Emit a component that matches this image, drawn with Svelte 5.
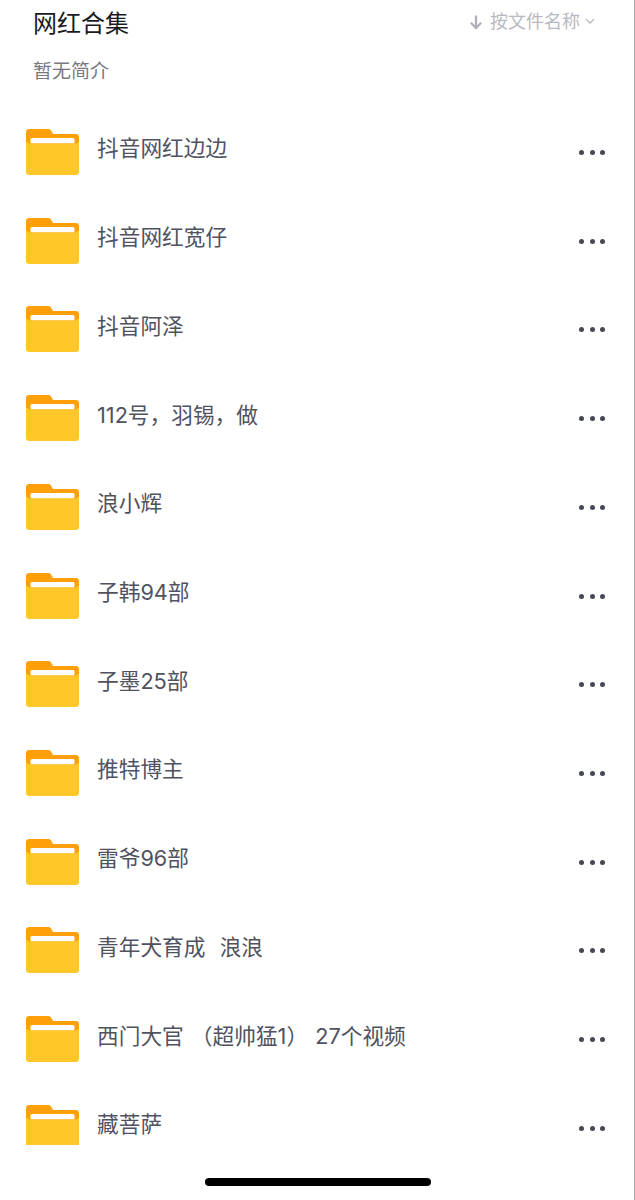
<script>
  const folders = [
    "抖音网红边边",
    "抖音网红宽仔",
    "抖音阿泽",
    "112号，羽锡，做",
    "浪小辉",
    "子韩94部",
    "子墨25部",
    "推特博主",
    "雷爷96部",
    "青年犬育成  浪浪",
    "西门大官 （超帅猛1） 27个视频",
    "藏菩萨"
  ];
</script>

<div class="page">
  <div class="head">
    <div class="title">网红合集</div>
    <div class="sort">
      <svg class="arrow" width="14" height="16" viewBox="0 0 14 16">
        <path d="M7 1.5V14M1.8 8.8 7 14l5.2-5.2" />
      </svg>
      <span>按文件名称</span>
      <svg class="chev" width="10" height="7" viewBox="0 0 10 7">
        <path d="M1 1.2 5 5.2l4-4" />
      </svg>
    </div>
  </div>
  <div class="desc">暂无简介</div>

  <div class="list">
    {#each folders as name}
      <div class="row">
        <svg class="folder" width="53" height="46" viewBox="0 0 53 46">
          <path fill="#ff9f0a" d="M3 0h19c1.6 0 2.4.6 3.2 1.8L27 5h23c1.7 0 3 1.3 3 3v12H0V3c0-1.7 1.3-3 3-3z" />
          <rect x="4.5" y="9" width="44" height="5.5" rx="1.5" fill="#fff" />
          <path fill="#ffc727" d="M0 13h1.5c.6 1 1.6 1.5 3 1.5h44c1.4 0 2.4-.5 3-1.5H53v30c0 1.7-1.3 3-3 3H3c-1.7 0-3-1.3-3-3z" />
        </svg>
        <div class="name">{name}</div>
        <div class="more"><i></i><i></i><i></i></div>
      </div>
    {/each}
  </div>

  <div class="home"></div>
</div>

<style>
  :global(body) {
    margin: 0;
    background: #fff;
  }

  .page {
    width: 635px;
    height: 1200px;
    box-sizing: border-box;
    border-right: 1px solid #a8a8a8;
    overflow: hidden;
    font-family: "Noto Sans CJK SC", "Noto Sans", sans-serif;
    background: #fff;
  }

  .head {
    height: 42px;
    padding: 0 39px 0 33px;
    display: flex;
    align-items: center;
    justify-content: space-between;
  }

  .title {
    font-size: 24px;
    color: #1a1a1e;
  }

  .sort {
    display: flex;
    align-items: center;
    color: #b8b9c2;
    font-size: 18px;
    margin-top: -2px;
  }

  .sort span {
    margin: 0 5px 0 7px;
  }

  .sort svg {
    fill: none;
    stroke: #b0b1ba;
  }

  .arrow {
    stroke-width: 2.3;
    margin-top: 3px;
  }

  .chev {
    stroke-width: 1.2;
    margin-top: 3px;
  }

  .desc {
    margin: 14px 0 0 33px;
    height: 28px;
    line-height: 28px;
    font-size: 19px;
    color: #77787f;
  }

  .list {
    margin-top: 23.6px;
    height: 1037.4px;
    overflow: hidden;
  }

  .row {
    height: 88.73px;
    padding-left: 26px;
    padding-right: 29px;
    display: flex;
    align-items: center;
    position: relative;
  }

  .folder {
    flex: none;
  }

  .name {
    flex: 1;
    margin: -10px 0 0 18px;
    font-family: Inter, "Noto Sans CJK SC", sans-serif;
    font-size: 21.7px;
    color: #50525f;
    white-space: pre;
    word-spacing: 1px;
  }

  .more {
    display: flex;
    gap: 5.4px;
    margin-top: 1px;
  }

  .more i {
    display: block;
    width: 5px;
    height: 5px;
    border-radius: 50%;
    background: #464855;
  }

  .home {
    width: 226px;
    height: 8px;
    border-radius: 4px;
    background: #000;
    margin: 33px 0 0 205px;
  }
</style>
